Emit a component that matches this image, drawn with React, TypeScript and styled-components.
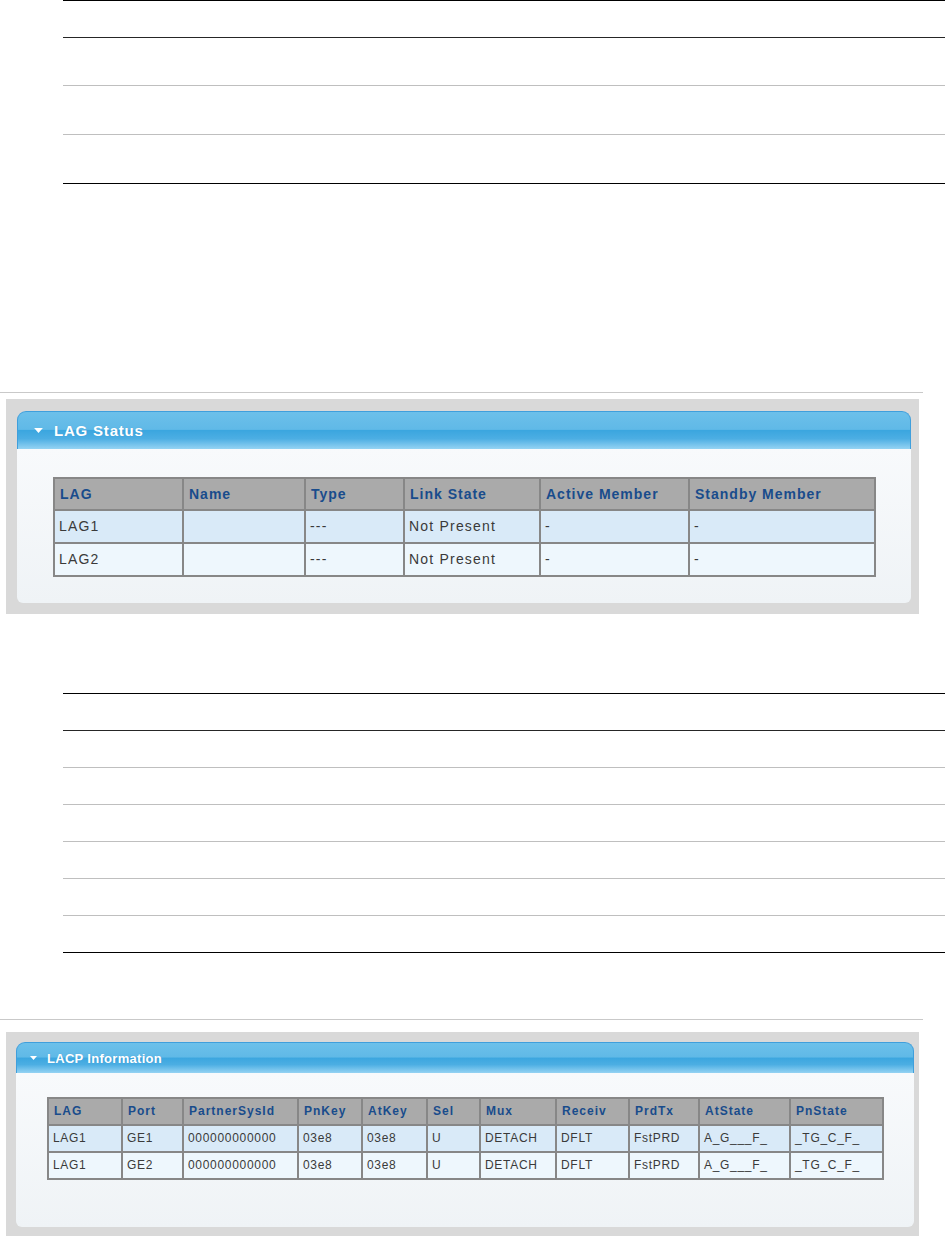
import React from "react";
import styled, { createGlobalStyle } from "styled-components";

const GlobalStyle = createGlobalStyle`
  html, body {
    margin: 0;
    padding: 0;
    background: #fff;
  }
  body {
    font-family: "Liberation Sans", Arial, sans-serif;
  }
`;

type Line = "black" | "dark" | "gray";

const lineColor: Record<Line, string> = {
  black: "#000",
  dark: "#262626",
  gray: "#bfbfbf",
};

type TableSize = "large" | "small";

type TableSpec = {
  size: TableSize
  cols: number[]
  head: string[]
  rows: string[][]
};

const lagStatus: TableSpec = {
  size: "large",
  cols: [129, 122, 99, 136, 149, 186],
  head: ["LAG", "Name", "Type", "Link State", "Active Member", "Standby Member"],
  rows: [
    ["LAG1", "", "---", "Not Present", "-", "-"],
    ["LAG2", "", "---", "Not Present", "-", "-"],
  ],
};

const lacpInfo: TableSpec = {
  size: "small",
  cols: [74, 61, 115, 64, 65, 53, 76, 73, 70, 91, 93],
  head: ["LAG", "Port", "PartnerSysId", "PnKey", "AtKey", "Sel", "Mux", "Receiv", "PrdTx", "AtState", "PnState"],
  rows: [
    ["LAG1", "GE1", "000000000000", "03e8", "03e8", "U", "DETACH", "DFLT", "FstPRD", "A_G___F_", "_TG_C_F_"],
    ["LAG1", "GE2", "000000000000", "03e8", "03e8", "U", "DETACH", "DFLT", "FstPRD", "A_G___F_", "_TG_C_F_"],
  ],
};

const RuleSet = ({ top, lines }: { top: number; lines: { h: number; line: Line }[] }) => (
  <Rules $top={top}>
    {lines.map((l, i) => (
      <RuleRow key={i} $h={l.h} $line={l.line} />
    ))}
  </Rules>
);

const DataTable = ({ spec }: { spec: TableSpec }) => {
  const width = spec.cols.reduce((a, b) => a + b, 0);
  return (
    <Table $size={spec.size} style={{ width }}>
      <colgroup>
        {spec.cols.map((w, i) => (
          <col key={i} style={{ width: w }} />
        ))}
      </colgroup>
      <thead>
        <tr>
          {spec.head.map((h) => (
            <HeadCell key={h} $size={spec.size}>{h}</HeadCell>
          ))}
        </tr>
      </thead>
      <tbody>
        {spec.rows.map((r, i) => (
          <BodyRow key={i} $odd={i % 2 === 0}>
            {r.map((c, j) => (
              <Cell key={j} $size={spec.size}>{c}</Cell>
            ))}
          </BodyRow>
        ))}
      </tbody>
    </Table>
  );
};

const Caret = ({ w }: { w: number }) => (
  <CaretIcon width={w} height={w / 2 + 1} viewBox="0 0 8 5">
    <polygon points="0,0 8,0 4,4.5" fill="#fff" />
  </CaretIcon>
);

export default function App() {
  return (
    <>
      <GlobalStyle />
      <Page>
        <RuleSet
          top={0}
          lines={[
            { h: 36, line: "dark" },
            { h: 47, line: "gray" },
            { h: 48, line: "gray" },
            { h: 48, line: "black" },
          ]}
        />

        <Divider $top={208} />
        <Panel $top={6} $pad="12px 8px 11px 11px">
          <PanelHeader $h={38} $indent={16}>
            <Caret w={9} />
            <PanelTitle $size={15}>LAG Status</PanelTitle>
          </PanelHeader>
          <PanelBody $pad="28px 0 0 36px" $h={154}>
            <DataTable spec={lagStatus} />
          </PanelBody>
        </Panel>

        <RuleSet
          top={79}
          lines={[
            { h: 36, line: "dark" },
            { h: 36, line: "gray" },
            { h: 36, line: "gray" },
            { h: 36, line: "gray" },
            { h: 36, line: "gray" },
            { h: 36, line: "gray" },
            { h: 36, line: "black" },
          ]}
        />

        <Divider $top={66} />
        <Panel $top={12} $pad="10px 5px 9px 10px">
          <PanelHeader $h={31} $indent={13}>
            <Caret w={7} />
            <PanelTitle $size={13}>LACP Information</PanelTitle>
          </PanelHeader>
          <PanelBody $pad="24px 0 0 31px" $h={154}>
            <DataTable spec={lacpInfo} />
          </PanelBody>
        </Panel>
      </Page>
    </>
  );
}

const Page = styled.div`
  width: 945px;
  display: flex;
  flex-direction: column;
`;

const Rules = styled.div<{ $top: number }>`
  margin: ${(p) => p.$top}px 0 0 63px;
  border-top: 1px solid #000;
  display: flex;
  flex-direction: column;
`;

const RuleRow = styled.div<{ $h: number; $line: Line }>`
  height: ${(p) => p.$h}px;
  border-bottom: 1px solid ${(p) => lineColor[p.$line]};
`;

const Divider = styled.div<{ $top: number }>`
  margin-top: ${(p) => p.$top}px;
  width: 923px;
  height: 1px;
  background: #c9c9c9;
`;

const Panel = styled.div<{ $top: number; $pad: string }>`
  margin: ${(p) => p.$top}px 0 0 6px;
  width: 913px;
  box-sizing: border-box;
  padding: ${(p) => p.$pad};
  background: #d9d9d9;
  display: flex;
  flex-direction: column;
`;

const PanelHeader = styled.div<{ $h: number; $indent: number }>`
  height: ${(p) => p.$h}px;
  box-sizing: border-box;
  display: flex;
  align-items: center;
  gap: ${(p) => (p.$indent === 16 ? 11 : 10)}px;
  padding-left: ${(p) => p.$indent}px;
  border: 1px solid #3f9fdc;
  border-bottom: none;
  border-radius: 9px 9px 0 0;
  background: linear-gradient(
    to bottom,
    #6cc0ea 0%,
    #60b9e7 47%,
    #3ba6df 50%,
    #4caee3 72%,
    #95d3f3 100%
  );
`;

const CaretIcon = styled.svg`
  display: block;
  flex: none;
`;

const PanelTitle = styled.span<{ $size: number }>`
  color: #fff;
  font-weight: bold;
  font-size: ${(p) => p.$size}px;
  letter-spacing: ${(p) => (p.$size > 14 ? 0.8 : 0.3)}px;
  text-shadow: 0 0 1px rgba(40, 120, 180, 0.4);
`;

const PanelBody = styled.div<{ $pad: string; $h: number }>`
  height: ${(p) => p.$h}px;
  box-sizing: border-box;
  padding: ${(p) => p.$pad};
  background: linear-gradient(to bottom, #f8fafc 0%, #eff3f6 100%);
  border-radius: 0 0 6px 6px;
`;

const Table = styled.table<{ $size: TableSize }>`
  table-layout: fixed;
  border-collapse: separate;
  border-spacing: 0;
  border-top: 2px solid #878787;
  border-left: 2px solid #878787;
  font-family: "Liberation Sans", Arial, sans-serif;
`;

const HeadCell = styled.th<{ $size: TableSize }>`
  background: #aaaaaa;
  color: #194c8c;
  text-align: left;
  font-weight: bold;
  font-size: ${(p) => (p.$size === "large" ? 14 : 12)}px;
  letter-spacing: 1px;
  line-height: ${(p) => (p.$size === "large" ? 30 : 25)}px;
  padding: 0 0 0 5px;
  border-right: 2px solid #878787;
  border-bottom: 2px solid #878787;
  white-space: nowrap;
  overflow: hidden;
`;

const BodyRow = styled.tr<{ $odd: boolean }>`
  background: ${(p) => (p.$odd ? "#d9eaf8" : "#eef7fd")};
`;

const Cell = styled.td<{ $size: TableSize }>`
  color: #3a3a3a;
  font-size: ${(p) => (p.$size === "large" ? 14 : 12)}px;
  letter-spacing: ${(p) => (p.$size === "large" ? 1.2 : 0.7)}px;
  line-height: ${(p) => (p.$size === "large" ? 31 : 25)}px;
  padding: 0 0 0 4px;
  border-right: 2px solid #878787;
  border-bottom: 2px solid #878787;
  white-space: nowrap;
  overflow: hidden;
`;
